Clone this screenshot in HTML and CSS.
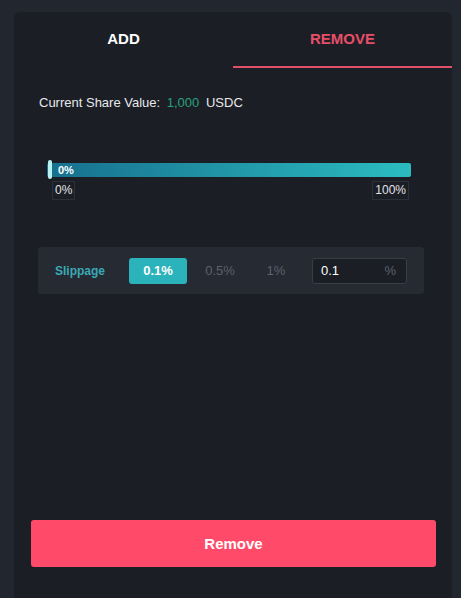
FILE: index.html
```html
<!DOCTYPE html>
<html lang="en">
<head>
  <meta charset="UTF-8">
  <meta name="viewport" content="width=device-width, initial-scale=1.0">
  <title>Liquidity</title>
  <link rel="stylesheet" href="styles.css">
</head>
<body>
  <div class="card">
    <div class="tabs">
      <div class="tab">ADD</div>
      <div class="tab active">REMOVE</div>
    </div>

    <div class="panel">
      <div class="share">
        Current Share Value: <span class="amount">1,000</span> USDC
      </div>

      <div class="range">
        <div class="range-bar">
          <span class="range-handle"></span>
          <span class="range-value">0%</span>
        </div>
        <div class="range-marks">
          <span class="mark">0%</span>
          <span class="mark">100%</span>
        </div>
      </div>

      <div class="slippage">
        <span class="slippage-label">Slippage</span>
        <button class="opt selected">0.1%</button>
        <span class="opt">0.5%</span>
        <span class="opt small">1%</span>
        <div class="slippage-input">
          <span>0.1</span>
          <span class="unit">%</span>
        </div>
      </div>

      <button class="submit">Remove</button>
    </div>
  </div>
</body>
</html>
```

FILE: styles.css
```css
html, body {
  margin: 0;
  padding: 0;
  height: 100%;
  overflow: hidden;
}
body {
  background: #22262e;
  padding: 12px 9px 0 14px;
  box-sizing: border-box;
  font-family: "Liberation Sans", Arial, sans-serif;
  color: #e8e9ec;
}
.card {
  background: #1b1e25;
  border-radius: 6px 6px 0 0;
  height: 100%;
}
.tabs {
  display: flex;
}
.tab {
  flex: 1;
  height: 54px;
  line-height: 54px;
  text-align: center;
  font-size: 15px;
  font-weight: bold;
  color: #ffffff;
  border-bottom: 2px solid transparent;
}
.tab.active {
  color: #e84e67;
  border-bottom-color: #e05069;
}
.panel {
  padding: 0 16px 0 17px;
}
.share {
  margin: 27px 0 0 8px;
  font-size: 13px;
  line-height: 16px;
}
.share .amount {
  color: #2aa27c;
  margin: 0 3px;
}

/* percentage slider */
.range {
  margin: 52px 0 0 16px;
  width: 364px;
}
.range-bar {
  position: relative;
  height: 14px;
  border-radius: 2px;
  background: linear-gradient(90deg, #17708f 0%, #2bbcc0 100%);
}
.range-handle {
  position: absolute;
  left: 1px;
  top: -3px;
  width: 4px;
  height: 19px;
  border-radius: 2px;
  background: #b9f1f0;
}
.range-value {
  display: block;
  padding-left: 11px;
  font-size: 11px;
  font-weight: bold;
  line-height: 14px;
  color: #ffffff;
}
.range-marks {
  display: flex;
  justify-content: space-between;
  margin: 4px 2px 0 5px;
}
.mark {
  font-size: 12px;
  line-height: 17px;
  padding: 0 2px;
  border: 1px solid #2d3038;
  color: #e1e3e6;
}

/* slippage picker */
.slippage {
  display: flex;
  align-items: center;
  width: 386px;
  height: 47px;
  margin: 47px 0 0 7px;
  padding-left: 17px;
  box-sizing: border-box;
  background: #262a33;
  border-radius: 3px;
}
.slippage-label {
  width: 74px;
  font-size: 12px;
  font-weight: bold;
  color: #3aa9b5;
}
.opt {
  width: 66px;
  text-align: center;
  font-size: 13px;
  color: #5c616d;
  font-family: inherit;
}
.opt.small {
  width: 46px;
}
.opt.selected {
  width: 58px;
  height: 26px;
  border: 0;
  border-radius: 3px;
  background: #2bb3bb;
  color: #ffffff;
  font-weight: bold;
}
.slippage-input {
  display: flex;
  justify-content: space-between;
  align-items: center;
  width: 95px;
  height: 26px;
  margin-left: 13px;
  padding: 0 10px 0 8px;
  box-sizing: border-box;
  background: #1b1e25;
  border: 1px solid #3a3d45;
  border-radius: 3px;
  font-size: 13px;
  color: #ffffff;
}
.slippage-input .unit {
  color: #5c616d;
}

.submit {
  display: block;
  width: 405px;
  height: 47px;
  margin-top: 226px;
  border: 0;
  border-radius: 3px;
  background: #ff4b69;
  color: #ffffff;
  font-family: inherit;
  font-size: 15px;
  font-weight: bold;
}
```
